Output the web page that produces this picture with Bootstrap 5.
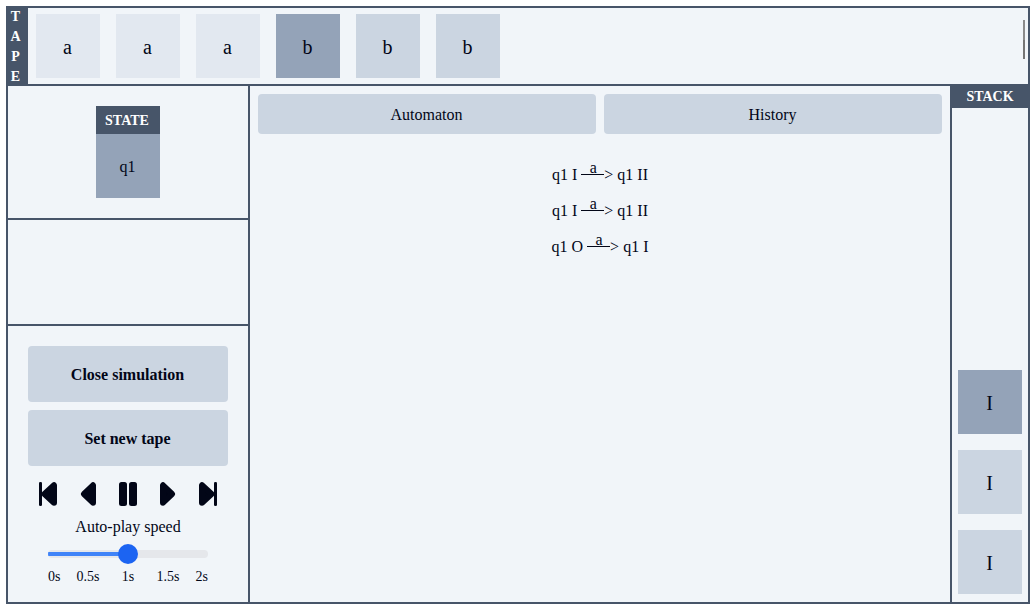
<!DOCTYPE html>
<html lang="en">
<head>
<meta charset="utf-8">
<meta name="viewport" content="width=device-width, initial-scale=1">
<title>Pushdown automaton simulator</title>
<link rel="stylesheet" href="https://cdn.jsdelivr.net/npm/bootstrap@5.3.0/dist/css/bootstrap.min.css">
<style>
  :root { --line: #475569; --pane: #f1f5f9; --cell: #cbd5e1; --cell-past: #e2e8f0; --cell-now: #94a3b8; }
  body { font: 16px/24px "Liberation Serif", "Times New Roman", serif; color: #020617; background: #fff; padding: 6px 4px 4px 6px; }
  .simulator { min-height: calc(100vh - 10px); border: 2px solid var(--line); background: var(--pane); }
  .line-bottom { border-bottom: 2px solid var(--line); }
  .caption { background: var(--line); color: #fff; font-size: 14px; line-height: 20px; font-weight: 700; text-align: center; padding: 1px 0; }
  .tape-caption { width: 20px; height: 79px; margin: -1px 0 -2px; padding: 0 5px 0 0; }
  .tape-caption { background: none; box-shadow: none; }
  .tape-label { background: var(--line); }
  .tape-cells { gap: 16px; padding: 6px 8px; }
  .tape-end { width: 2px; height: 39px; margin: 12px 3px 0 auto; background: linear-gradient(#8b8b8b 50%, #757575 50%); }
  .cell { width: 64px; height: 64px; display: flex; align-items: center; justify-content: center; padding: 2px 1px 0 0; font-size: 20px; background: var(--cell); }
  .cell.past { background: var(--cell-past); }
  .cell.now { background: var(--cell-now); }
  .cell.state { font-size: 16px; }
  .side { width: 242px; border-right: 2px solid var(--line); }
  .state-pane { padding: 20px; }
  .state-caption { width: 64px; padding: 5px 2px 3px 0; }
  .message-pane { height: 106px; }
  .controls { padding: 20px 20px 8px; }
  .sim-btn { background: var(--cell); color: inherit; border: 0; border-radius: 4px; padding: 9px 9px 7px 8px; font-size: 16px; line-height: 24px; }
  .sim-btn:hover { background: var(--cell-now); }
  .sim-btn.tall { padding: 17px 9px 15px 8px; font-weight: 700; }
  .icon-btn { border: 0; padding: 0; background: none; color: inherit; width: 40px; height: 24px; line-height: 0; }
  .icon-btn svg { width: 24px; height: 24px; fill: currentColor; }
  .icon-btn polygon { stroke: currentColor; stroke-width: 6; stroke-linejoin: round; }
  .speed { width: 160px; margin-top: 9px; }
  .speed input { display: block; width: 100%; height: 8px; margin: 11px 0 9px; border-radius: 4px; appearance: none; cursor: pointer;
    background: linear-gradient(#3f83f8, #3f83f8) 0 50% / 50% 4px no-repeat, #e5e7eb; }
  .speed input::-webkit-slider-thumb { appearance: none; width: 20px; height: 20px; border: 0; border-radius: 50%; background: #1c64f2; }
  .speed input::-moz-range-thumb { width: 20px; height: 20px; border: 0; border-radius: 50%; background: #1c64f2; }
  .ticks { display: grid; grid-template-columns: 1fr 2fr 2fr 2fr 1fr; font-size: 14px; line-height: 20px; text-align: center; }
  .history { gap: 12px; padding-top: 29px; }
  .step { gap: 4px; }
  .arrow { display: flex; position: relative; }
  .arrow::before { content: ""; width: 23px; height: 1px; margin-top: 11px; background: currentColor; }
  .arrow span { position: absolute; left: 0; width: 24px; top: -7px; text-align: center; }
  .stack { width: 78px; border-left: 2px solid var(--line); }
  .stack-cells { gap: 16px; padding: 8px 6px; }
</style>
</head>
<body>
<div class="simulator d-flex flex-column">
  <header class="d-flex line-bottom">
    <div class="tape-label"><div class="caption tape-caption">T<br>A<br>P<br>E</div></div>
    <div class="tape-cells d-flex">
      <div class="cell past">a</div>
      <div class="cell past">a</div>
      <div class="cell past">a</div>
      <div class="cell now">b</div>
      <div class="cell">b</div>
      <div class="cell">b</div>
    </div>
    <div class="tape-end"></div>
  </header>

  <div class="d-flex flex-grow-1">
    <aside class="side flex-shrink-0">
      <section class="state-pane line-bottom d-flex flex-column align-items-center">
        <div class="caption state-caption">STATE</div>
        <div class="cell now state">q1</div>
      </section>
      <section class="message-pane line-bottom"></section>
      <section class="controls">
        <div class="d-grid gap-2">
          <button type="button" class="sim-btn tall">Close simulation</button>
          <button type="button" class="sim-btn tall">Set new tape</button>
        </div>
        <div class="d-flex mt-3">
          <button type="button" class="icon-btn" aria-label="First step"><svg viewBox="0 0 24 24"><rect x="3" width="3" height="24" rx="1.300"/><polygon points="8.500,12 18,3.300 18,20.700"/></svg></button>
          <button type="button" class="icon-btn" aria-label="Step back"><svg viewBox="0 0 24 24"><polygon points="8,12 17,3.300 17,20.700"/></svg></button>
          <button type="button" class="icon-btn" aria-label="Pause"><svg viewBox="0 0 24 24"><rect x="3" width="8" height="24" rx="2.500"/><rect x="13" width="8" height="24" rx="2.500"/></svg></button>
          <button type="button" class="icon-btn" aria-label="Step forward"><svg viewBox="0 0 24 24"><polygon points="16,12 7,3.300 7,20.700"/></svg></button>
          <button type="button" class="icon-btn" aria-label="Last step"><svg viewBox="0 0 24 24"><rect x="18" width="3" height="24" rx="1.300"/><polygon points="15.500,12 6,3.300 6,20.700"/></svg></button>
        </div>
        <div class="speed mx-auto">
          <label for="speed" class="d-block text-center">Auto-play speed</label>
          <input type="range" id="speed" min="0" max="2" step="0.5" value="1">
          <div class="ticks">
            <span class="text-start">0s</span><span>0.5s</span><span>1s</span><span>1.5s</span><span class="text-end">2s</span>
          </div>
        </div>
      </section>
    </aside>

    <main class="flex-grow-1 p-2">
      <nav class="d-flex gap-2">
        <button type="button" class="sim-btn flex-fill w-50">Automaton</button>
        <button type="button" class="sim-btn flex-fill w-50">History</button>
      </nav>
      <div class="history d-flex flex-column align-items-center">
        <div class="step d-flex"><span>q1 I</span><span class="arrow"><span>a</span>&gt;</span><span>q1 II</span></div>
        <div class="step d-flex"><span>q1 I</span><span class="arrow"><span>a</span>&gt;</span><span>q1 II</span></div>
        <div class="step d-flex"><span>q1 O</span><span class="arrow"><span>a</span>&gt;</span><span>q1 I</span></div>
      </div>
    </main>

    <aside class="stack flex-shrink-0 d-flex flex-column">
      <div class="caption">STACK</div>
      <div class="stack-cells d-flex flex-column mt-auto">
        <div class="cell now">I</div>
        <div class="cell">I</div>
        <div class="cell">I</div>
      </div>
    </aside>
  </div>
</div>
<script src="https://cdn.jsdelivr.net/npm/bootstrap@5.3.0/dist/js/bootstrap.bundle.min.js"></script>
</body>
</html>
